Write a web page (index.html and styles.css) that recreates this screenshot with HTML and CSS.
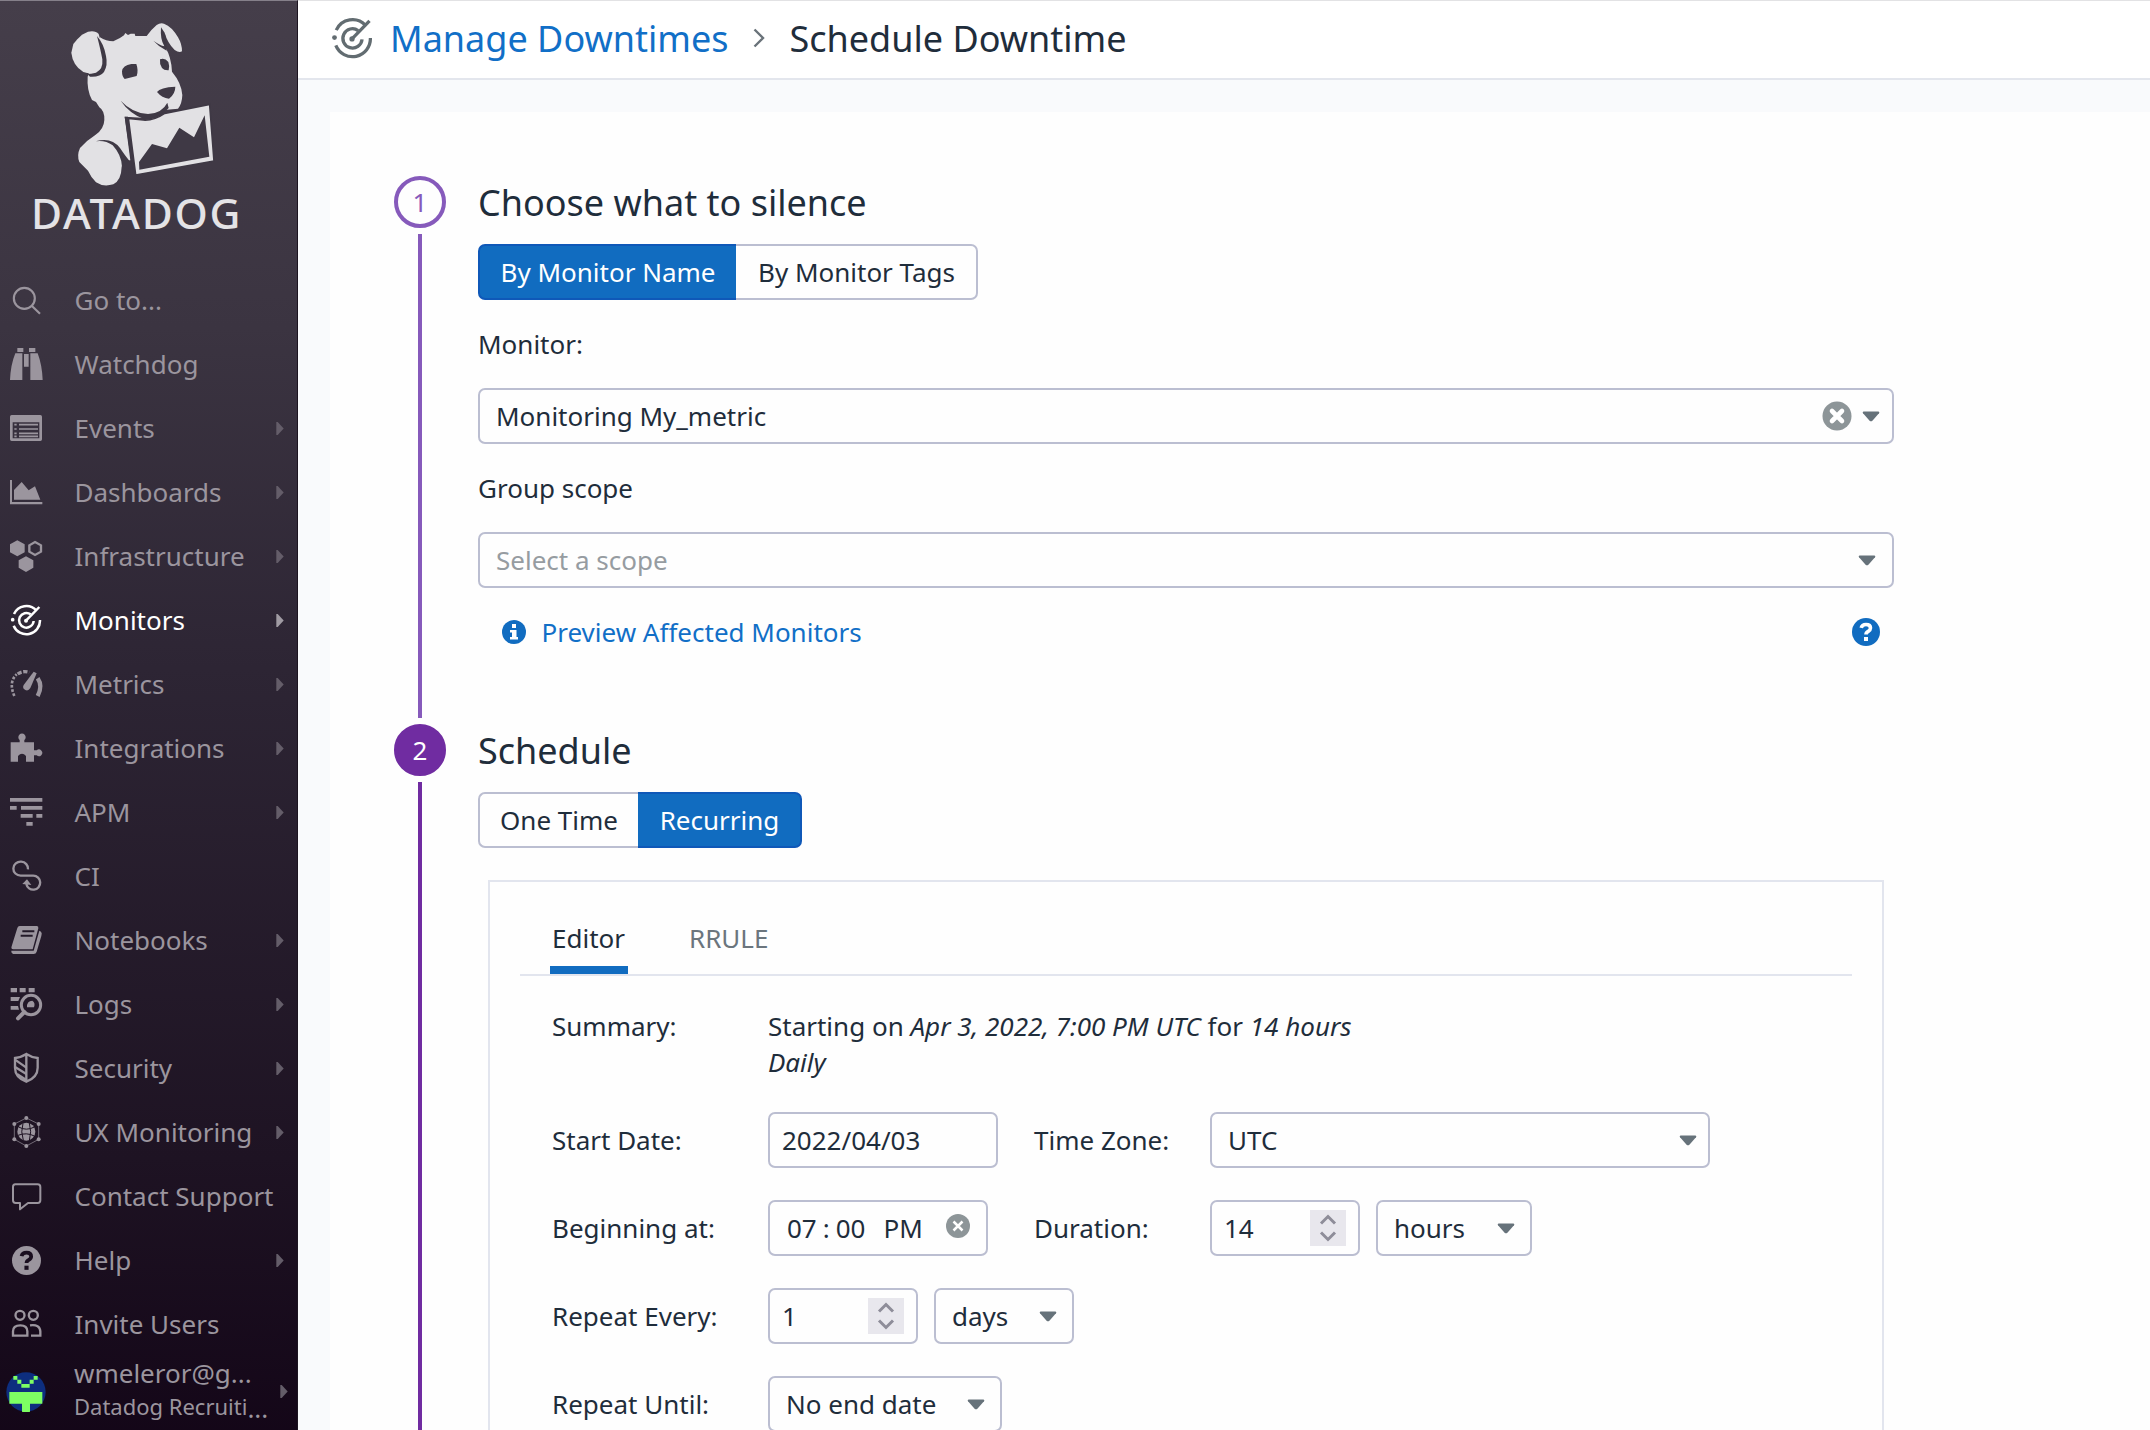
FILE: index.html
```html
<!DOCTYPE html>
<html lang="en">
<head>
<meta charset="utf-8">
<title>Schedule Downtime</title>
<link rel="stylesheet" href="styles.css">
</head>
<body>
<svg class="defs" width="0" height="0">
  <symbol id="i-monitor" viewBox="0 0 96 96">
    <g fill="none" stroke="currentColor" stroke-width="7.5">
      <path d="M12 30A41 41 0 0 1 79 19"/>
      <path d="M90 48A41 41 0 0 1 11 65"/>
      <path d="M62 31A22 22 0 1 0 71 51"/>
      <path d="M48 50L88 9"/>
    </g>
    <circle cx="8" cy="47" r="5.500" fill="currentColor"/>
    <circle cx="48" cy="50" r="6" fill="currentColor"/>
  </symbol>
  <symbol id="i-caret" viewBox="0 0 18 11"><path d="M1.500 .5h15q1.500 .6.5 1.800L10.400 9.700q-1.400 1.200-2.800 0L1 2.300Q0 1.100 1.500 .5z" fill="currentColor"/></symbol>
  <symbol id="i-clear" viewBox="0 0 30 30"><circle cx="15" cy="15" r="14.500" fill="currentColor"/><path d="M10 10l10 10M20 10l-10 10" stroke="#fff" stroke-width="4.600" stroke-linecap="round"/></symbol>
  <symbol id="i-help" viewBox="0 0 28 28"><circle cx="14" cy="14" r="14" fill="currentColor"/><path d="M9.200 9.800q.8-3.300 4.800-3.300 4.500 0 4.500 3.600 0 1.900-2.300 3.300-2.200 1.200-2.200 3.100" fill="none" stroke="var(--mark,#fff)" stroke-width="3.600"/><rect x="12" y="19" width="4" height="4" fill="var(--mark,#fff)"/></symbol>
  <symbol id="i-arrow" viewBox="0 0 8 14"><path d="M0 0h1.500L8 7l-6.500 7H0z" fill="currentColor"/></symbol>
  <symbol id="i-spin" viewBox="0 0 36 36"><path d="M11 13.500l7-7 7 7M11 22.500l7 7 7-7" fill="none" stroke="#8e8d99" stroke-width="3"/></symbol>
</svg>

<div class="app">
  <aside class="sidebar">
    <div class="brand">
      <svg class="brand-dog" viewBox="0 0 900 570">
        <path fill="#e2e1e4" d="M300 112Q318 124 340 124Q360 116 372 106L376 99L384 105L392 101L404 101L406 108L440 108Q452 90 470 75Q480 68 492 71Q516 80 534 112Q546 132 546 154Q538 160 524 150Q502 128 494 98L496 142Q514 172 516 215Q545 250 547 285Q546 312 534 326L500 329L440 354L374 350L391 481L374 482L365 500Q364 540 340 553Q310 562 288 547Q272 530 264 512L238 486Q230 466 240 444Q262 420 285 406Q312 388 313 360Q314 332 298 322L288 306L276 300Q260 270 263 230Z"/>
        <path fill="#e2e1e4" d="M296 102Q286 90 264 95L246 104L232 118L220 132L214 158Q218 196 250 216Q280 226 304 210Q320 180 296 102Z"/>
        <path fill="#3f3945" d="M291 108Q302 150 307 178Q310 208 288 218Q272 222 262 222L270 230Q300 232 312 216Q324 196 318 168Q312 132 291 108Z"/>
        <path fill="#3f3945" d="M483 82Q480 118 493 139Q480 136 460 122Q476 140 500 152Q502 126 494 98Z"/>
        <path fill="#3f3945" d="M366 214Q368 196 394 192L409 192Q416 212 410 228L374 237Q366 230 366 214ZM480 178Q494 172 505 186Q510 200 506 211Q492 212 486 204Q478 192 480 178ZM471 276Q480 262 526 260Q526 282 507 296Q486 294 471 276Z"/>
        <path fill="#3f3945" d="M362 302Q398 340 444 342Q486 340 502 308L506 324Q498 334 484 342Q460 362 430 356Q388 340 362 302Z"/>
        <path fill="#3f3945" d="M287 424Q334 410 360 444Q376 468 388 482L366 500Q364 464 338 436Q316 420 287 424Z"/>
        <path fill="#e2e1e4" stroke="#3f3945" stroke-width="5" d="M385 355L430 360Q462 362 494 340L629 313L642 483L407 525Z"/>
        <path fill="#3f3945" d="M374 350L384 350L404 520L396 500ZM417 486L456 432L501 445L538 383L582 412L614 346L628 470L418 509Z"/>
      </svg>
      <div class="brand-name">DATADOG</div>
    </div>
    <nav class="menu">
      <a class="item"><svg class="icon" viewBox="0 0 96 96"><g fill="none" stroke="currentColor" stroke-width="6.500"><circle cx="43" cy="43" r="31.500"/><path d="M65 65L90 89"/></g></svg><span>Go to...</span></a>
      <a class="item"><svg class="icon" viewBox="0 0 96 96"><path fill="currentColor" d="M22 0h18v12H22zM57 0h19v12H57zM16 16h21v80H0Q2 50 16 16zM61 16h22Q96 50 98 96H61zM42 18h14v38H42z"/></svg><span>Watchdog</span></a>
      <a class="item"><svg class="icon" viewBox="0 0 96 96"><path fill="currentColor" fill-rule="evenodd" d="M5 9h86q5 0 5 5v68q0 5-5 5H5q-5 0-5-5V14q0-5 5-5zM8 31v48h80V31z"/><path stroke="currentColor" stroke-width="5" d="M13 38h7M13 51h7M13 64h7M13 73h7M27 38h57M27 51h57M27 64h57M27 73h57"/></svg><span>Events</span><svg class="arrow"><use href="#i-arrow"/></svg></a>
      <a class="item"><svg class="icon" viewBox="0 0 96 96"><path fill="currentColor" d="M0 12h6v66h91v7H0zM12 71V42L35 18L56 43L75 31L91 71z"/></svg><span>Dashboards</span><svg class="arrow"><use href="#i-arrow"/></svg></a>
      <a class="item"><svg class="icon" viewBox="0 0 96 96"><path fill="currentColor" d="M22 1l22 12v24L22 49L0 37V13zM48 49l22 12v22L48 96L26 83V61z"/><path fill="none" stroke="currentColor" stroke-width="7" d="M75 6l18 10v19L75 45L58 35V16z"/></svg><span>Infrastructure</span><svg class="arrow"><use href="#i-arrow"/></svg></a>
      <a class="item active"><svg class="icon"><use href="#i-monitor"/></svg><span>Monitors</span><svg class="arrow"><use href="#i-arrow"/></svg></a>
      <a class="item"><svg class="icon" viewBox="0 0 96 96"><path fill="none" stroke="currentColor" stroke-width="8" stroke-dasharray="8 5" d="M13 84Q-5 42 20 19"/><path fill="none" stroke="currentColor" stroke-width="10" stroke-dasharray="13 5" d="M23 18Q38 7 58 13"/><path fill="none" stroke="currentColor" stroke-width="13" d="M83 31Q99 54 83 84"/><path fill="currentColor" d="M71 11l9 5L61 60Q55 70 46 66Q36 61 41 51z"/></svg><span>Metrics</span><svg class="arrow"><use href="#i-arrow"/></svg></a>
      <a class="item"><svg class="icon" viewBox="0 0 96 96"><path fill="currentColor" d="M2 31H29V24A11 11 0 1 1 43 24V31H72V55H80A10 10 0 1 1 80 70H72V89H48V72Q36 58 24 72V89H2z"/></svg><span>Integrations</span><svg class="arrow"><use href="#i-arrow"/></svg></a>
      <a class="item"><svg class="icon" viewBox="0 0 96 96"><path fill="currentColor" d="M0 6h97v11H0zM0 30h20v11H0zM33 30h64v11H33zM32 54h36v11H32zM79 54h18v11H79zM49 78h19v11H49z"/></svg><span>APM</span><svg class="arrow"><use href="#i-arrow"/></svg></a>
      <a class="item"><svg class="icon" viewBox="0 0 96 96"><path fill="none" stroke="currentColor" stroke-width="7" d="M54 28A22 21 0 1 0 32 47H70A21 21 0 1 1 49 72"/><path fill="currentColor" d="M37 72L51 58L64 75z"/></svg><span>CI</span></a>
      <a class="item"><svg class="icon" viewBox="0 0 96 96"><path fill="currentColor" d="M29 6H80q6 0 5 7L68 76H10q-8 0-5-9L22 12q2-6 7-6zM88 20l5 3Q97 27 94 36L80 83q-2 7-9 7H15Q3 90 4 80H71z"/><path stroke="#231a28" stroke-width="6" d="M37 22h36M32 35h36"/></svg><span>Notebooks</span><svg class="arrow"><use href="#i-arrow"/></svg></a>
      <a class="item"><svg class="icon" viewBox="0 0 96 96"><path fill="currentColor" d="M2 0h19v13H2zM29 0h18v13H29zM56 0h18v13H56zM2 27h28l-5 12H2zM2 54h22l3 11H2z"/><circle cx="63" cy="51" r="29" fill="none" stroke="currentColor" stroke-width="9"/><path stroke="currentColor" stroke-width="12" stroke-linecap="round" d="M43 72L24 91"/><path fill="currentColor" d="M51 58Q50 38 67 38Q77 44 72 58z"/></svg><span>Logs</span><svg class="arrow"><use href="#i-arrow"/></svg></a>
      <a class="item"><svg class="icon" viewBox="0 0 96 96"><g fill="none" stroke="currentColor" stroke-width="7"><path d="M49 6Q31 17 15 18V47Q15 76 49 89Q83 76 83 47V18Q66 17 49 6zM49 6V89"/><path d="M15 23L49 47M14 44L49 66M22 67L49 84"/></g></svg><span>Security</span><svg class="arrow"><use href="#i-arrow"/></svg></a>
      <a class="item"><svg class="icon" viewBox="0 0 96 96"><g fill="currentColor"><circle cx="49" cy="47" r="27"/><circle cx="49" cy="6" r="6"/><circle cx="13" cy="24" r="6"/><circle cx="86" cy="24" r="6"/><circle cx="13" cy="70" r="6"/><circle cx="86" cy="70" r="6"/><circle cx="49" cy="90" r="6"/></g><path fill="none" stroke="currentColor" stroke-width="2" d="M49 6L86 24V70L49 90L13 70V24z"/><g fill="none" stroke="#1d1222" stroke-width="3"><path d="M26 33Q49 46 73 33M24 58Q49 48 73 60"/><path d="M39 22Q31 47 40 73M58 21Q66 47 58 74"/></g></svg><span>UX Monitoring</span><svg class="arrow"><use href="#i-arrow"/></svg></a>
      <a class="item"><svg class="icon" viewBox="0 0 96 96"><path fill="none" stroke="currentColor" stroke-width="6" stroke-linejoin="round" d="M16 13H83q8 0 8 8V61q0 8-8 8H54L30 88V69H17q-8 0-8-8V21q0-8 7-8z"/></svg><span>Contact Support</span></a>
      <a class="item"><svg class="icon icon-help"><use href="#i-help"/></svg><span>Help</span><svg class="arrow"><use href="#i-arrow"/></svg></a>
      <a class="item"><svg class="icon" viewBox="0 0 96 96"><g fill="none" stroke="currentColor" stroke-width="7"><circle cx="30" cy="22" r="13.500"/><circle cx="70" cy="22" r="13.500"/><path d="M9 83V70Q9 52 31 52Q52 52 52 70V83zM60 52Q90 48 91 70V83H63"/></g></svg><span>Invite Users</span></a>
      <a class="item user">
        <svg class="avatar" viewBox="0 0 120 120"><circle cx="60" cy="60" r="59" fill="#0d2e7f"/><path fill="#7dff63" d="M22 12h12v11H22zM34 23h12v12H34zM46 36h25v11H46zM71 23h12v12H71zM83 12h12v11H83zM10 60h99v35H72v24Q60 122 48 119V95H10z"/></svg>
        <span class="user-text"><span class="user-mail">wmeleror@g...</span><span class="user-org">Datadog Recruiti<span class="dots">...</span></span></span>
        <svg class="arrow"><use href="#i-arrow"/></svg>
      </a>
    </nav>
  </aside>

  <main class="main">
    <header class="topbar">
      <svg class="topbar-icon"><use href="#i-monitor"/></svg>
      <a class="crumb-link">Manage Downtimes</a>
      <svg class="crumb-sep" viewBox="0 0 12 20"><path d="M1.500 1.500L10 10L1.500 18.500" fill="none" stroke="#6a737a" stroke-width="2.400"/></svg>
      <span class="crumb-current">Schedule Downtime</span>
    </header>

    <div class="card">
      <section class="step step-one">
        <div class="rail"><div class="num">1</div><div class="line"></div></div>
        <div class="content">
          <h2>Choose what to silence</h2>
          <div class="toggle"><button class="on first-name">By Monitor Name</button><button class="by-tags">By Monitor Tags</button></div>
          <label class="label">Monitor:</label>
          <div class="box wide">Monitoring My_metric<svg class="clear"><use href="#i-clear"/></svg><svg class="caret"><use href="#i-caret"/></svg></div>
          <label class="label">Group scope</label>
          <div class="box wide placeholder">Select a scope<svg class="caret"><use href="#i-caret"/></svg></div>
          <div class="preview">
            <svg class="info" viewBox="0 0 24 24"><circle cx="12" cy="12" r="12" fill="#116cc0"/><path fill="#fff" d="M10 4h4v4h-4zM8 10h6.500v7H16v2.500H8V17h2v-4.500H8z"/></svg>
            <a>Preview Affected Monitors</a>
            <svg class="help"><use href="#i-help"/></svg>
          </div>
        </div>
      </section>

      <section class="step step-two">
        <div class="rail"><div class="num">2</div><div class="line"></div></div>
        <div class="content">
          <h2>Schedule</h2>
          <div class="toggle"><button class="one-time">One Time</button><button class="on recurring">Recurring</button></div>
          <div class="panel">
            <div class="tabs"><a class="tab current">Editor</a><a class="tab">RRULE</a></div>
            <div class="summary"><span>Summary:</span><p>Starting on <i>Apr 3, 2022, 7:00 PM UTC</i> for <i>14 hours</i><br><i>Daily</i></p></div>
            <div class="row">
              <span>Start Date:</span>
              <div class="cell"><div class="box input date">2022/04/03</div></div>
              <span>Time Zone:</span>
              <div class="cell"><div class="box zone">UTC<svg class="caret"><use href="#i-caret"/></svg></div></div>
            </div>
            <div class="row">
              <span>Beginning at:</span>
              <div class="cell"><div class="box time"><span>07</span><span>:</span><span>00</span><span class="pm">PM</span><svg class="clear-sm" viewBox="0 0 24 24"><circle cx="12" cy="12" r="12" fill="#8d9598"/><path d="M7.500 7.500l9 9M16.500 7.500l-9 9" stroke="#fff" stroke-width="2.500"/></svg></div></div>
              <span>Duration:</span>
              <div class="cell"><div class="box input number">14<svg class="spin"><use href="#i-spin"/></svg></div><div class="box hours">hours<svg class="caret"><use href="#i-caret"/></svg></div></div>
            </div>
            <div class="row">
              <span>Repeat Every:</span>
              <div class="cell"><div class="box input number">1<svg class="spin"><use href="#i-spin"/></svg></div><div class="box days">days<svg class="caret"><use href="#i-caret"/></svg></div></div>
            </div>
            <div class="row">
              <span>Repeat Until:</span>
              <div class="cell"><div class="box until">No end date<svg class="caret"><use href="#i-caret"/></svg></div></div>
            </div>
          </div>
        </div>
      </section>
    </div>
  </main>
</div>
</body>
</html>
```

FILE: styles.css
```css
* { box-sizing: border-box; }

body {
  margin: 0;
  height: 1430px;
  overflow: hidden;
  font: 26px/36px "Noto Sans", sans-serif;
  color: #1f2d3b;
  background: #f9fafc;
}

.defs { position: absolute; }

.app {
  display: grid;
  grid-template-columns: 298px 1fr;
  height: 1430px;
  overflow: hidden;
  white-space: nowrap;
}

/* Sidebar */
.sidebar {
  display: flex;
  flex-direction: column;
  background: linear-gradient(#453e4a, #3b3441 22%, #2d2534 45%, #1e1323 78%, #120416);
  border-top: 1px solid #85808a;
  border-right: 1px solid #1c1420;
  overflow: hidden;
}

.brand { height: 267px; flex: none; }

.brand-dog { display: block; width: 300px; height: 190px; margin-top: -1px; }

.brand-name {
  margin-left: 31px;
  margin-top: -4px;
  font-size: 42.5px;
  line-height: 54px;
  font-weight: 500;
  letter-spacing: 1.7px;
  color: #e4e3e6;
}

.item {
  display: flex;
  align-items: center;
  height: 64px;
  padding-left: 10px;
  color: #9b959e;
}

.icon { width: 32px; height: 32px; margin-right: 32.5px; flex: none; overflow: visible; }
.icon-help { width: 29px; height: 29px; margin: 0 33.5px 0 2px; --mark: #1a0e1f; }

.arrow { width: 8px; height: 13px; margin-left: auto; margin-right: 13px; color: #645d69; flex: none; }

.active { color: #fff; }
.active .arrow { color: #a09ba3; }

.user { height: 74px; padding-left: 6px; padding-bottom: 3px; }
.user .arrow { margin-right: 9px; }
.avatar { width: 40px; height: 40px; margin-right: 28px; flex: none; }
.user-text { display: flex; flex-direction: column; margin-top: -5px; }
.user-mail { line-height: 34px; }
.user-org { display: flex; font-size: 22px; line-height: 32px; }
.dots { font-size: 26px; padding-top: 4px; line-height: 28px; }

/* Top bar */
.main { display: flex; flex-direction: column; min-width: 0; border-top: 1px solid #e2e2e4; }

.topbar {
  display: flex;
  align-items: center;
  height: 79px;
  flex: none;
  padding: 0 0 3px 33px;
  background: #fff;
  border-bottom: 2px solid #e3e6ed;
  font-size: 36px;
}

.topbar-icon { width: 42px; height: 42px; color: #626c71; margin-right: 17px; overflow: visible; }
.crumb-link { color: #116fc7; }
.crumb-link, .crumb-current { padding-top: 2px; }
.crumb-sep { width: 12px; height: 20px; margin: 0 24px 0 25px; }

/* Steps */
.card {
  flex: 1;
  margin: 32px 0 0 32px;
  padding: 64px 0 0 64px;
  background: #fefefe;
}

.step { display: grid; grid-template-columns: 52px 1416px; column-gap: 32px; }
.step-one { height: 548px; }
.step-two { height: 760px; }

.rail { display: flex; flex-direction: column; align-items: center; gap: 6px; padding-bottom: 6px; }

.num {
  display: flex;
  align-items: center;
  justify-content: center;
  flex: none;
  width: 52px;
  height: 52px;
  border: 4px solid #865abb;
  border-radius: 50%;
  color: #865abb;
}
.line { width: 4px; flex: 1; background: #865abb; }
.step-two .num { background: #702ca1; border-color: #702ca1; color: #fff; }
.step-two .line { background: #702ca1; }

h2 { margin: 0; padding-top: 1px; height: 52px; font-size: 36px; line-height: 52px; font-weight: 400; }

.toggle { display: flex; margin-top: 16px; }
button {
  height: 56px;
  padding: 0;
  font: inherit;
  color: inherit;
  background: #fefefe;
  border: 2px solid #bbbed1;
}
button:first-child { border-radius: 7px 0 0 7px; border-right: 0; }
button:last-child { border-radius: 0 7px 7px 0; border-left: 0; padding-left: 1px; }
button.on { background: #116cc0; border-color: #0f58b8; color: #fff; }
.first-name { width: 258px; }
.by-tags { width: 242px; }
.one-time { width: 160px; }
.recurring { width: 164px; }

.label { display: block; height: 88px; padding-top: 26px; }

.box {
  display: flex;
  align-items: center;
  height: 56px;
  padding: 0 16px;
  border: 2px solid #bbbed1;
  border-radius: 7px;
  background: #fefefe;
  flex: none;
}
.placeholder { color: #969ca1; }
.caret { width: 18px; height: 11px; margin-left: auto; color: #66727a; }
.clear { width: 30px; height: 30px; margin-left: auto; color: #8d9598; }
.clear + .caret { margin-left: 10px; margin-right: -4px; }

.preview { display: flex; align-items: center; height: 88px; padding: 0 14px 0 24px; }
.preview a { color: #116fc7; margin-left: 15.5px; }
.info { width: 24px; height: 24px; }
.help { width: 28px; height: 28px; color: #116cc0; margin-left: auto; }

/* Schedule editor */
.panel {
  margin: 32px 10px 0;
  padding: 0 30px;
  height: 600px;
  border: 2px solid #e2e5ee;
}
.tabs { display: flex; gap: 59px; height: 94px; padding-left: 30px; border-bottom: 2px solid #e2e5ee; }
.tab { width: 78px; height: 92px; padding: 38px 2px 0; color: #6b757d; }
.current { color: inherit; border-bottom: 8px solid #116cc0; }

.summary { display: grid; grid-template-columns: 216px auto; padding: 32px 0 32px 32px; }
.summary p { margin: 0; }

.row {
  display: grid;
  grid-template-columns: 216px 266px 176px auto;
  align-items: center;
  height: 56px;
  margin-bottom: 32px;
  padding-left: 32px;
}
.cell { display: flex; gap: 16px; width: 0; }
.input { padding: 0 12px; }
.date { width: 230px; }
.zone { width: 500px; padding-right: 11px; }
.number { width: 150px; }
.spin { width: 36px; height: 36px; margin-left: auto; background: #e8e7ed; }
.hours { width: 156px; padding-right: 15px; }
.days { width: 140px; padding-right: 15px; }
.until { width: 234px; padding-right: 15px; }
.time { width: 220px; padding: 0 16px 0 17px; }
.time span + span { margin-left: 6px; }
.time span + .pm { margin-left: 18px; }
.clear-sm { width: 24px; height: 24px; margin: -4px 0 0 auto; }
```
